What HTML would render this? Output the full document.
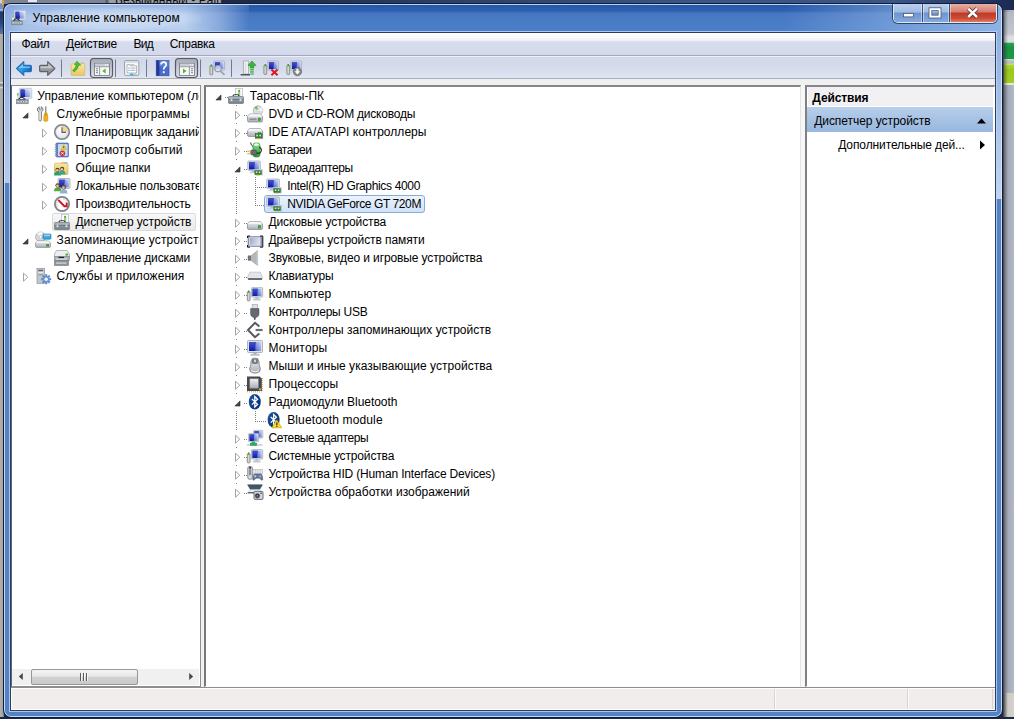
<!DOCTYPE html>
<html lang="ru">
<head>
<meta charset="utf-8">
<title>Управление компьютером</title>
<style>
html,body{margin:0;padding:0;}
body{width:1014px;height:719px;overflow:hidden;position:relative;background:#1b2a4e;font-family:"Liberation Sans",sans-serif;font-size:12px;color:#000;}
.abs{position:absolute;}
.t{position:absolute;white-space:nowrap;line-height:18px;height:18px;font-size:12px;color:#000;}
svg{position:absolute;overflow:visible;}
/* desktop bits behind */
#bgtop{left:0;top:0;width:222px;height:4px;background:linear-gradient(90deg,#a8c0e0 0,#d89848 3px,#7c8496 5px,#7c8496 105px,#5a6070 106px,#5a6070 108px,#9a9fa8 109px,#a0a4ac 100%);overflow:hidden;}
#bgtoptxt{left:115px;top:-6px;font-size:12px;line-height:12px;color:#101014;white-space:nowrap;letter-spacing:0.1px;}
#bgtopbox{left:28px;top:0;width:9px;height:2px;background:#e8e8ee;}
#bgtop2{left:222px;top:0;width:792px;height:12px;background:linear-gradient(90deg,#1c2946,#2e4470 35%,#3a5688 60%,#3a5688 85%,#1a2a52 100%);}
#bgleft{left:0;top:0;width:4px;height:719px;background:linear-gradient(90deg,#b0afab,#a9a8a6 60%,#6c6e74);}
#bgright{left:1003px;top:10px;width:11px;height:709px;background:linear-gradient(90deg,#9a9ea8,#b4b9ca);}
#bgl1{left:0;top:0;width:4px;height:34px;background:linear-gradient(#c0d0e8 0,#c0d0e8 3px,#8090b0 4px,#8090b0 9px,#c8d0e0 10px,#1c3c70 12px,#24447a 22px,#587aa8 34px);}
#bgl2{left:2px;top:0;width:2px;height:5px;background:#e09838;}
#bgl3{left:0;top:82px;width:3px;height:7px;background:linear-gradient(#d8d8dc 0,#d8d8dc 1px,#8a8a90 2px,#8a8a90 4px,#d0d0d4 5px,#d0d0d4 6px,#9a9a9e 7px);}
#bgbottom{left:0;top:717px;width:1014px;height:2px;background:#1a2744;}
/* window */
#win{left:4px;top:4px;width:998px;height:713px;border-radius:7px;background:#5383c5;box-shadow:0 0 0 1px #141c30;overflow:hidden;}
#glass{left:0;top:0;width:998px;height:29px;background:linear-gradient(#2356a8,#2d60b0 24%,#4676c0 32%,#4a7bc5 60%,#4a80c9);}
#glow{left:0;top:0;width:245px;height:29px;background:linear-gradient(rgba(110,150,215,0.45),rgba(110,150,215,0) 38%),linear-gradient(90deg,#8eace0,#a6c0e8 8%,#b4cbec 30%,#b8ceee 74%,rgba(184,206,238,0.55) 88%,rgba(184,206,238,0));}
#tglow{left:18px;top:3px;width:180px;height:24px;background:radial-gradient(ellipse at center,rgba(255,255,255,0.38),rgba(255,255,255,0.18) 55%,rgba(255,255,255,0) 75%);}
#glowr{left:780px;top:0;width:218px;height:29px;background:linear-gradient(90deg,rgba(150,185,232,0),rgba(150,185,232,0.45) 45%,rgba(160,192,236,0.8));}
#frl{left:0;top:28px;width:6px;height:151px;background:linear-gradient(#93aedd,#b6c9ea);}
#frr{left:992px;top:28px;width:6px;height:167px;background:linear-gradient(#8fb0e0,#c2d4f0);}
#hl{left:0;top:0;width:996px;height:711px;border:1px solid rgba(215,232,252,0.85);border-radius:7px;}
#hl2{left:5px;top:27px;width:986px;height:679px;border:1px solid rgba(190,215,248,0.8);}
#bgr1{left:1004px;top:43px;width:10px;height:16px;background:linear-gradient(#2aa450,#1a9440 30%,#1f9a48);}
#bgr2{left:1004px;top:65px;width:10px;height:18px;background:linear-gradient(#b0d430,#9cc81c 30%,#a4cc20);}
#bgrsh{left:1003px;top:10px;width:5px;height:709px;background:linear-gradient(90deg,rgba(30,34,44,0.8),rgba(30,34,44,0.35) 35%,rgba(30,34,44,0));}
#bgr0{left:1004px;top:12px;width:10px;height:31px;background:linear-gradient(#b4b8c2,#c2c6ce 70%,#dcdfe6 80%,#dcdfe6 95%,#8ac89a);}
#bgr4{left:1004px;top:59px;width:10px;height:6px;background:linear-gradient(#d0e4d0,#b4b8c0 50%,#c8dc80);}
#bgr5{left:1004px;top:83px;width:10px;height:2px;background:#e4e8e0;}
#bgr3{left:1003px;top:693px;width:11px;height:24px;background:linear-gradient(90deg,#8a8884,#cfccc8 40%,#d4d0cc);}

#client{left:10px;top:32px;width:984px;height:677px;background:#f0f0f0;border:1px solid #2f3d5c;}
#menubar{left:11px;top:33px;width:984px;height:22px;background:linear-gradient(#ffffff,#f3f5fa 32%,#d8ddee 40%,#d3d8ea 100%);border-bottom:1px solid #a4aab8;}
#toolbar{left:11px;top:56px;width:984px;height:22px;background:linear-gradient(#eceff8 0,#eceff8 1px,#d2d7e9 1px,#d6dbec 55%,#e0e5f2 100%);border-bottom:1px solid #a9aebb;}
#lpane{left:11px;top:85px;width:188px;height:600px;background:#fff;border:1px solid #8c8e94;border-left-color:#5d6678;overflow:hidden;}
#mpane{left:204px;top:85px;width:594px;height:599px;background:#fff;border:2px solid;border-color:#85868a #e4e4e6 #fdfdfd #77787c;border-bottom-width:1px;border-right-width:1px;box-shadow:4px 0 0 #f7f7f7;}
#rpane{left:805px;top:85px;width:187px;height:599px;background:#fff;border:2px solid;border-color:#85868a #fff #fdfdfd #808184;border-bottom-width:1px;border-right-width:1px;}
#status{left:11px;top:687px;width:984px;height:22px;background:#f0edec;border-top:1px solid #8e8e8e;box-shadow:inset 0 1px 0 #fff,inset 0 -1px 0 #fff,inset 1px 0 0 #fff;}

#sel1{left:40px;top:127px;width:142px;height:16px;border:1px solid #dadada;border-radius:2px;background:linear-gradient(#f8f8f8,#e9e9e9);}
#sel2{left:264px;top:195px;width:159px;height:16px;border:1px solid #84acdd;border-radius:3px;background:linear-gradient(#ebf3fd,#cfe1f8);}
#rhead{left:808px;top:87px;width:185px;height:19px;background:#f1f1f3;border-bottom:1px solid #fff;}
#rsel{left:807px;top:107px;width:186px;height:25px;background:linear-gradient(#b9cfea,#a6c2e4 50%,#99b8de);}
#hscroll{left:12px;top:669px;width:187px;height:16px;background:#f0f0f0;}
#thumb{left:31px;top:669px;width:105px;height:14px;border:1px solid #979797;border-radius:2px;background:linear-gradient(#f4f4f4,#e6e6e6 45%,#d2d2d2 50%,#c8c8c8);}
.cap{position:absolute;top:4px;height:18px;}
#capwrap{left:893px;top:4px;width:102px;height:18px;border:1px solid rgba(255,255,255,0.75);border-top:none;border-radius:0 0 5px 5px;box-shadow:0 0 0 1px rgba(20,30,60,0.7);overflow:hidden;}
#bmin{left:0;top:0;width:28px;height:18px;background:linear-gradient(#bccfec,#9fbbe4 45%,#6a94d0 50%,#86aade);border-right:1px solid rgba(30,45,80,0.75);box-shadow:inset -1px 0 0 rgba(255,255,255,0.45);}
#bmax{left:29px;top:0;width:26px;height:18px;background:linear-gradient(#bccfec,#9fbbe4 45%,#6a94d0 50%,#86aade);border-right:1px solid rgba(30,45,80,0.75);box-shadow:inset -1px 0 0 rgba(255,255,255,0.45),inset 1px 0 0 rgba(255,255,255,0.45);}
#bclose{left:56px;top:0;width:46px;height:18px;background:linear-gradient(#e6b0a4,#d47c6e 45%,#c03826 50%,#cc4c38 80%,#de8060);box-shadow:inset 1px 0 0 rgba(255,255,255,0.45);}
</style>
</head>
<body>
<div id="bgtop2" class="abs"></div>
<div id="bgtop" class="abs"><div id="bgtoptxt" class="abs">Безымянный - Paint</div><div id="bgtopbox" class="abs"></div></div>
<div id="bgleft" class="abs"></div>
<div id="bgright" class="abs"></div>
<div id="bgl1" class="abs"></div>
<div id="bgl2" class="abs"></div>
<div id="bgl3" class="abs"></div>
<div id="bgbottom" class="abs"></div>
<div id="bgr0" class="abs"></div>
<div id="bgr4" class="abs"></div>
<div id="bgr5" class="abs"></div>
<div id="bgr1" class="abs"></div>
<div id="bgr2" class="abs"></div>
<div id="bgr3" class="abs"></div>
<div id="bgrsh" class="abs"></div>
<div id="win" class="abs">
  <div id="glass" class="abs"></div>
  <div id="glow" class="abs"></div>
  <div id="tglow" class="abs"></div>
  <div id="glowr" class="abs"></div>
  <div id="frl" class="abs"></div>
  <div id="frr" class="abs"></div>
  <div id="hl" class="abs"></div>
  <div id="hl2" class="abs"></div>
</div>
<div id="client" class="abs"></div>
<div id="menubar" class="abs"></div>
<div id="toolbar" class="abs"></div>
<div id="lpane" class="abs">
<div id="sel1" class="abs"></div>
<div class="abs" style="left:0;top:0;width:187.4px;height:600px;overflow:hidden;">
<div class="t" style="left:25.299999999999997px;top:1px;letter-spacing:0.043px;">Управление компьютером (локальный)</div>
<div class="t" style="left:44.6px;top:19px;letter-spacing:0.095px;">Служебные программы</div>
<div class="t" style="left:63.5px;top:37px;letter-spacing:-0.011px;">Планировщик заданий</div>
<div class="t" style="left:63.5px;top:55px;letter-spacing:0.109px;">Просмотр событий</div>
<div class="t" style="left:63.5px;top:73px;letter-spacing:0.053px;">Общие папки</div>
<div class="t" style="left:63.5px;top:91px;letter-spacing:-0.102px;">Локальные пользователи</div>
<div class="t" style="left:63.5px;top:109px;letter-spacing:-0.066px;">Производительность</div>
<div class="t" style="left:63.5px;top:127px;letter-spacing:-0.075px;">Диспетчер устройств</div>
<div class="t" style="left:44.6px;top:145px;letter-spacing:0.099px;">Запоминающие устройства</div>
<div class="t" style="left:63.5px;top:163px;letter-spacing:-0.122px;">Управление дисками</div>
<div class="t" style="left:44.6px;top:181px;letter-spacing:0.046px;">Службы и приложения</div>
</div>
<svg width="188" height="600" viewBox="12 86 188 600" style="left:0;top:0;">
<!-- ===== LEFT TREE ICONS ===== -->
<!-- root: computer management -->
<use href="#cmgmt" x="16" y="88"/>
<!-- tools: wrench + screwdriver -->
<g transform="translate(36,106)">
 <path d="M3.2,0.8 Q1,1.6 1.3,4 Q1.6,5.4 3,5.8 V13.8 Q3,15 4.2,15 Q5.4,15 5.4,13.8 V5.8 Q6.8,5.2 7,3.8 Q7.2,1.6 5.2,0.8 V3.4 L4.2,4 L3.2,3.4 Z" fill="#dcdee2" stroke="#74767c" stroke-width="0.95"/>
 <path d="M3.9,6.2 V13.6" stroke="#fbfbfc" stroke-width="0.8"/>
 <rect x="9.2" y="0.4" width="1.2" height="7" fill="#7c8088"/>
 <path d="M8.4,7 H11.2 V9 L11.8,10 V14.4 Q11.8,15.4 9.8,15.4 Q7.8,15.4 7.8,14.4 V10 L8.4,9 Z" fill="#f0b21c" stroke="#c08410" stroke-width="0.5"/>
 <rect x="8.4" y="8.6" width="2.8" height="0.9" fill="#c0820c"/>
</g>
<!-- clock -->
<g transform="translate(54,124)">
 <circle cx="8" cy="8" r="7.2" fill="url(#gFace)" stroke="#84868c" stroke-width="1.7"/>
 <path d="M8,8 L8,2 A6,6 0 0 1 14,8 Z" fill="#f3d58c"/>
 <circle cx="8" cy="8" r="5.9" fill="none" stroke="#d5dae4" stroke-width="0.6"/>
 <path d="M8,3.2 V8.4 H12" fill="none" stroke="#5a5d64" stroke-width="1.1"/>
</g>
<!-- event viewer -->
<g transform="translate(54,142)">
 <rect x="2" y="1" width="12.5" height="14" rx="0.8" fill="#5b86c4" stroke="#3f66a4" stroke-width="0.6"/>
 <rect x="4" y="2.2" width="9.5" height="11.6" fill="#dbe8fa"/>
 <g stroke="#9fbbe4" stroke-width="0.6"><path d="M4,4 H13.5 M4,6 H13.5 M4,8 H13.5 M4,10 H13.5 M4,12 H13.5"/></g>
 <g fill="#8a94a8"><rect x="0.8" y="2.5" width="2.2" height="0.9"/><rect x="0.8" y="4.7" width="2.2" height="0.9"/><rect x="0.8" y="6.9" width="2.2" height="0.9"/><rect x="0.8" y="9.1" width="2.2" height="0.9"/><rect x="0.8" y="11.3" width="2.2" height="0.9"/><rect x="0.8" y="13.2" width="2.2" height="0.9"/></g>
 <path d="M9.7,2.6 L12.4,7.6 H7 Z" fill="#f6d42a" stroke="#c8a008" stroke-width="0.5"/>
 <rect x="9.3" y="4.2" width="0.9" height="2" fill="#5a4800"/>
 <circle cx="8.4" cy="11.3" r="2.6" fill="#e0323a" stroke="#a81820" stroke-width="0.4"/>
 <path d="M7.3,10.2 L9.5,12.4 M9.5,10.2 L7.3,12.4" stroke="#fff" stroke-width="0.9"/>
</g>
<!-- shared folders -->
<g transform="translate(54,160)">
 <path d="M6,3.5 L7.5,2 H13.5 V3.5 Z" fill="#e8c874"/>
 <path d="M0.5,4.2 Q0.5,3.2 1.5,3.2 H13 Q14,3.2 14,4.2 V13.4 Q14,14.4 13,14.4 H1.5 Q0.5,14.4 0.5,13.4 Z" fill="url(#gFolder)" stroke="#d0a850" stroke-width="0.6"/>
 <rect x="10" y="2.2" width="3" height="1.2" fill="#8ec0e8"/>
 <use href="#person" x="0" y="7.4" fill="#2ea070"/>
 <use href="#person" x="4.6" y="6.4" fill="#3aa880"/>
</g>
<!-- local users -->
<g transform="translate(54,178)">
 <use href="#monS" x="3.8" y="0" transform="scale(0.95)"/>
 <use href="#person" x="0" y="4.6" fill="#5aa838" transform="scale(1.05)"/>
 <g transform="translate(5.8,6.6) scale(1.1)"><path d="M0,8 Q0,4.2 3.5,4.2 Q7,4.2 7,8 Z" fill="#8ab4d8"/><circle cx="3.5" cy="2.4" r="2.1" fill="#6a4a30"/><circle cx="3.3" cy="2.9" r="1.3" fill="#e0b890"/></g>
</g>
<!-- performance -->
<g transform="translate(54,196)">
 <circle cx="8" cy="8" r="7.1" fill="#fdfdfd" stroke="#808288" stroke-width="1.8"/>
 <path d="M4.2,3.8 L10.4,10.2 H12.7 V6.4" fill="none" stroke="#c41822" stroke-width="1.9" stroke-linejoin="miter"/>
 <path d="M3.4,10.4 A5.4,5.4 0 0 1 3.6,5.2" fill="none" stroke="#8a8c92" stroke-width="0.9" stroke-dasharray="0.9 0.9"/>
 <path d="M9,3 A5.4,5.4 0 0 1 12.4,5.2" fill="none" stroke="#9a9ca2" stroke-width="0.8" stroke-dasharray="0.8 0.8"/>
</g>
<!-- device manager -->
<use href="#devmgr" x="54" y="214"/>
<!-- storage -->
<g transform="translate(35,232)">
 <circle cx="5.5" cy="5" r="5" fill="#d4d6da" stroke="#9a9da3" stroke-width="0.6"/>
 <path d="M5.5,5 L2,1.6 A5,5 0 0 1 8,0.7 Z" fill="#f6f6f8"/>
 <circle cx="5.5" cy="5" r="1.4" fill="#fff" stroke="#a8abb0" stroke-width="0.5"/>
 <rect x="8" y="2" width="8" height="5.2" rx="1" fill="#36a4dc" stroke="#1a78b4" stroke-width="0.6"/>
 <rect x="8.8" y="2.6" width="6.4" height="1.6" rx="0.6" fill="#8ed4f4"/>
 <use href="#drive" x="0" y="8.4" transform="translate(0,1.6) scale(1,0.82)"/>
</g>
<!-- disk management -->
<g transform="translate(54,250)">
 <path d="M2.5,0.5 H13 L15.5,4 V6.5 H0.5 V4 Z" fill="#eceef0" stroke="#9a9fa6" stroke-width="0.7"/>
 <rect x="11.5" y="3.6" width="2.6" height="2" fill="#48b03a"/>
 <rect x="0.5" y="6.5" width="15" height="4" fill="#a9aeb4" stroke="#80868e" stroke-width="0.6"/>
 <rect x="4.5" y="6.8" width="5.5" height="1.3" fill="#20242a"/>
 <rect x="2" y="8.6" width="11" height="1" fill="#e8eaec"/>
 <rect x="0.5" y="10.5" width="14" height="5" fill="#8d9298" stroke="#72787f" stroke-width="0.6"/>
 <rect x="2" y="12.5" width="10.5" height="1.1" fill="#dfe2e5"/>
</g>
<!-- services -->
<g transform="translate(35,268)">
 <rect x="2" y="0.5" width="7.5" height="14.8" fill="#c2c7cd" stroke="#8b9198" stroke-width="0.7"/>
 <rect x="3.4" y="1.8" width="4.6" height="1.3" fill="#5b6169"/>
 <rect x="3.4" y="4.2" width="4.6" height="1" fill="#f2f3f5"/>
 <rect x="3.4" y="6.2" width="4.6" height="1" fill="#878d95"/>
 <g transform="translate(11.2,11.2)">
  <g fill="#5a84c4"><rect x="-1" y="-5" width="2" height="10"/><rect x="-5" y="-1" width="10" height="2"/><rect x="-1" y="-5" width="2" height="10" transform="rotate(45)"/><rect x="-1" y="-5" width="2" height="10" transform="rotate(-45)"/></g>
  <circle r="3.4" fill="#6a94d0"/><circle r="1.7" fill="#eef4fc"/>
 </g>
</g>
<!-- left arrows -->
<use href="#aExp" x="22" y="112"/>
<use href="#aCol" x="42" y="128.7"/>
<use href="#aCol" x="42" y="146.7"/>
<use href="#aCol" x="42" y="164.7"/>
<use href="#aCol" x="42" y="182.7"/>
<use href="#aCol" x="42" y="200.7"/>
<use href="#aExp" x="22" y="238"/>
<use href="#aCol" x="23" y="272.7"/>

</svg>
</div>
<div id="mpane" class="abs"></div>
<div id="rpane" class="abs"></div>
<div id="status" class="abs"></div>
<div id="sel2" class="abs"></div>
<div id="rhead" class="abs"></div>
<div id="rsel" class="abs"></div>
<div id="hscroll" class="abs"></div>
<div id="thumb" class="abs"></div>
<div id="capwrap" class="abs"><div id="bmin" class="abs"></div><div id="bmax" class="abs"></div><div id="bclose" class="abs"></div></div>
<svg id="ico" width="1014" height="719" viewBox="0 0 1014 719" style="left:0;top:0;">
<defs>
<linearGradient id="gScr" x1="0" y1="0" x2="1" y2="0"><stop offset="0" stop-color="#0d1fae"/><stop offset="0.5" stop-color="#1a33c6"/><stop offset="0.58" stop-color="#6f8ae2"/><stop offset="1" stop-color="#bccbf6"/></linearGradient>
<linearGradient id="gScrV" x1="0" y1="0" x2="0" y2="1"><stop offset="0" stop-color="#ffffff" stop-opacity="0.25"/><stop offset="1" stop-color="#0a1890" stop-opacity="0.25"/></linearGradient>
<linearGradient id="gGray" x1="0" y1="0" x2="0" y2="1"><stop offset="0" stop-color="#f2f3f5"/><stop offset="1" stop-color="#a9adb4"/></linearGradient>
<linearGradient id="gGray2" x1="0" y1="0" x2="0" y2="1"><stop offset="0" stop-color="#b8c0c8"/><stop offset="0.5" stop-color="#8e98a2"/><stop offset="1" stop-color="#737c86"/></linearGradient>
<linearGradient id="gFolder" x1="0" y1="0" x2="0" y2="1"><stop offset="0" stop-color="#fbe7a2"/><stop offset="1" stop-color="#e9c468"/></linearGradient>
<linearGradient id="gBlueArrow" x1="0" y1="0" x2="0" y2="1"><stop offset="0" stop-color="#7fd0f8"/><stop offset="0.5" stop-color="#2f9be4"/><stop offset="1" stop-color="#1f72c8"/></linearGradient>
<linearGradient id="gGrayArrow" x1="0" y1="0" x2="0" y2="1"><stop offset="0" stop-color="#b0b2b4"/><stop offset="1" stop-color="#85878a"/></linearGradient>
<linearGradient id="gGreen" x1="0" y1="0" x2="0" y2="1"><stop offset="0" stop-color="#8fe08a"/><stop offset="1" stop-color="#1e9a2c"/></linearGradient>
<radialGradient id="gFace" cx="0.4" cy="0.35" r="0.7"><stop offset="0" stop-color="#ffffff"/><stop offset="1" stop-color="#dfe6f2"/></radialGradient>
<linearGradient id="gBT" x1="0" y1="0" x2="1" y2="1"><stop offset="0" stop-color="#1a55a8"/><stop offset="1" stop-color="#072a6c"/></linearGradient>

<!-- monitor 16x16 -->
<g id="mon">
 <rect x="0.5" y="0.5" width="15" height="12" rx="1" fill="#dfe3ea" stroke="#9aa2b2" stroke-width="0.8"/>
 <rect x="2" y="2" width="12" height="9" fill="url(#gScr)"/>
 <polygon points="2,2 9,2 7,11 2,11" fill="#0b1cb2"/>
 <rect x="2" y="2" width="12" height="9" fill="url(#gScrV)"/>
 <rect x="6.5" y="12.6" width="3" height="1.6" fill="#a9aeb8"/>
 <rect x="3.5" y="14" width="9" height="1.5" rx="0.7" fill="#c8ccd4" stroke="#9ea3ad" stroke-width="0.4"/>
</g>
<!-- small monitor 13x13 (no stand) -->
<g id="monS">
 <rect x="0.5" y="0.5" width="12.5" height="10.5" rx="0.8" fill="#dfe3ea" stroke="#9aa2b2" stroke-width="0.8"/>
 <rect x="1.8" y="1.8" width="10" height="8" fill="url(#gScr)"/>
 <polygon points="1.8,1.8 7.8,1.8 6,9.8 1.8,9.8" fill="#0b1cb2"/>
 <rect x="1.8" y="1.8" width="10" height="8" fill="url(#gScrV)"/>
</g>
<!-- green card 8x6 -->
<g id="card">
 <rect x="0" y="0.5" width="8" height="5" fill="#2c8038" stroke="#1c5c28" stroke-width="0.5"/>
 <rect x="1.2" y="1.6" width="1.8" height="1.8" fill="#d8f0c8"/>
 <rect x="4.6" y="1.6" width="1.8" height="1.8" fill="#d8f0c8"/>
 <rect x="0.8" y="5.5" width="5.5" height="1" fill="#d8b040"/>
 <rect x="8" y="-1.5" width="0.8" height="8" fill="#8b9098"/>
</g>
<!-- drive 16x9 -->
<g id="drive">
 <path d="M2.5,0.5 H13.5 L15.5,3 V7 Q15.5,8.5 14,8.5 H2 Q0.5,8.5 0.5,7 V3 Z" fill="url(#gGray)" stroke="#8a8f98" stroke-width="0.8"/>
 <path d="M2.5,0.8 H13.5 L15.2,3 H0.8 Z" fill="#f4f5f7"/>
 <rect x="11.2" y="4.5" width="2.6" height="2.6" fill="#3fae3a" stroke="#2a7a28" stroke-width="0.4"/>
</g>
<!-- toolbox 16x10 -->
<g id="tbox">
 <path d="M5,2.2 Q5,0.5 8,0.5 Q11,0.5 11,2.2" fill="none" stroke="#3c4046" stroke-width="1.2"/>
 <rect x="0.5" y="2.5" width="15" height="7" rx="0.8" fill="url(#gGray2)" stroke="#6c757e" stroke-width="0.7"/>
 <rect x="0.8" y="5" width="14.4" height="0.9" fill="#5f6870" opacity="0.8"/>
 <rect x="2.6" y="4.6" width="1.8" height="2.6" fill="#d9dee3"/>
 <rect x="11.6" y="4.6" width="1.8" height="2.6" fill="#d9dee3"/>
</g>
<!-- devmgr icon 16x16 -->
<g id="devmgr">
 <rect x="7.5" y="0.5" width="7" height="8.5" fill="#fbfbfb" stroke="#b4b8be" stroke-width="0.7"/>
 <rect x="10" y="3.2" width="2.2" height="5" fill="#9ccf7c"/>
 <circle cx="11.1" cy="2.8" r="1.1" fill="#4cae2c"/>
 <use href="#tbox" y="6"/>
</g>
<!-- arrows -->
<polygon id="aExp" points="6,0.9 6,6 0.9,6" fill="#484848" stroke="#262626" stroke-width="0.6" stroke-linejoin="miter"/>
<polygon id="aCol" points="0.5,0.5 0.5,8.5 4.8,4.5" fill="#fff" stroke="#a4a4a4" stroke-width="1" stroke-linejoin="miter"/>
<!-- person -->
<g id="person">
 <path d="M0,8 Q0,4.2 3.5,4.2 Q7,4.2 7,8 Z"/>
 <circle cx="3.5" cy="2.4" r="2.1" fill="#5a4030"/>
 <circle cx="3.3" cy="2.8" r="1.3" fill="#e8c4a0"/>
</g>
<!-- bluetooth -->
<g id="bt">
 <ellipse cx="6.2" cy="8" rx="6" ry="7.7" fill="url(#gBT)"/>
 <path d="M3.3,5.2 L9,10.6 L6.2,13.2 V2.8 L9,5.4 L3.3,10.8" fill="none" stroke="#fff" stroke-width="1.3" stroke-linejoin="miter"/>
</g>
<!-- tiny tower -->
<g id="tower">
 <rect x="0.3" y="1.6" width="2.8" height="9.2" rx="0.7" fill="#d4d6d2" stroke="#7a7c74" stroke-width="0.8"/>
 <rect x="1" y="0.4" width="1.4" height="2.4" fill="#3da62e"/>
</g>
<linearGradient id="gPressed" x1="0" y1="0" x2="0" y2="1"><stop offset="0" stop-color="#a6aab6"/><stop offset="0.45" stop-color="#c2c6d0"/><stop offset="1" stop-color="#dcdfe8"/></linearGradient>
<linearGradient id="gMem" x1="0" y1="0" x2="1" y2="0.3"><stop offset="0" stop-color="#9aa3c0"/><stop offset="1" stop-color="#dde1ee"/></linearGradient>
<linearGradient id="gBlueArrowH" x1="0" y1="0" x2="1" y2="0.4"><stop offset="0" stop-color="#58c0f6"/><stop offset="0.5" stop-color="#2a9cea"/><stop offset="1" stop-color="#0e6cc4"/></linearGradient>
<g id="cmgmt">
 <rect x="3.2" y="0.3" width="12.6" height="10" rx="0.8" fill="#e6e9f0" stroke="#b4bccc" stroke-width="0.7"/>
 <rect x="4.6" y="1.6" width="9.8" height="7.4" fill="url(#gScr2)"/>
 <polygon points="4.6,1.6 8.2,1.6 9.2,9 4.6,9" fill="#0b1cb2"/>
 <rect x="4.6" y="1.6" width="9.8" height="7.4" fill="url(#gScrV)"/>
 <rect x="0.9" y="5" width="1.9" height="5.6" fill="#d4e8c8"/><rect x="1.3" y="5.3" width="1.1" height="2.2" fill="#4aa632"/>
 <path d="M2.2,11.6 Q5.6,6.8 9.2,11.6 Z" fill="#f0f2f4" stroke="#1c2028" stroke-width="1.1"/>
 <rect x="0.3" y="11.5" width="12" height="4.3" fill="#8d989e" stroke="#74808a" stroke-width="0.5"/>
 <rect x="1.3" y="12.9" width="10" height="1.5" fill="#cdd4d9"/>
 <rect x="3.4" y="12.9" width="0.8" height="1.5" fill="#6f7a82"/><rect x="5.9" y="12.9" width="0.8" height="1.5" fill="#6f7a82"/><rect x="8.4" y="12.9" width="0.8" height="1.5" fill="#6f7a82"/>
</g>
<linearGradient id="gScr2" x1="0" y1="0" x2="1" y2="0"><stop offset="0" stop-color="#0d1fae"/><stop offset="0.4" stop-color="#1a33c6"/><stop offset="0.48" stop-color="#93a8ec"/><stop offset="1" stop-color="#d6defa"/></linearGradient>
</defs>

<!-- ===== MID TREE ICONS ===== -->
<!-- root -->
<use href="#devmgr" x="228" y="88"/>
<!-- DVD -->
<g transform="translate(247,106)">
 <circle cx="11" cy="4.6" r="4.8" fill="#dcdee2" stroke="#9b9ea5" stroke-width="0.6"/>
 <path d="M11,4.6 L7.2,2 A4.8,4.8 0 0 1 10,0 Z" fill="#6cc060"/>
 <path d="M11,4.6 L14,0.9 A4.8,4.8 0 0 1 15.7,5.4 Z" fill="#f4f4f6"/>
 <circle cx="11" cy="4.6" r="1.2" fill="#fff" stroke="#aaa" stroke-width="0.4"/>
 <use href="#drive" x="0" y="7.5"/>
 <rect x="2.5" y="12.6" width="7" height="1" fill="#6a6f78"/>
</g>
<!-- IDE -->
<g transform="translate(247,124)">
 <use href="#drive" x="0" y="4"/>
 <g transform="translate(8.2,9.2) scale(0.9,0.92)"><use href="#card"/></g>
</g>
<!-- battery -->
<g transform="translate(247,142)">
 <path d="M3.6,0.5 Q4,3.6 6,4.6" fill="none" stroke="#2a2e28" stroke-width="0.9"/>
 <rect x="6" y="1" width="7" height="14" rx="2.4" fill="url(#gGreen)" stroke="#1c7a24" stroke-width="0.6"/>
 <path d="M6.4,3 Q9.5,-0.6 12.6,3 Q9.5,4.6 6.4,3 Z" fill="#f4faf2"/>
 <path d="M12.4,5 Q16,7.5 13.4,10.5 Q11.5,12 9,10.8" fill="none" stroke="#2a2e28" stroke-width="1.1"/>
 <rect x="3.6" y="8" width="6" height="5" rx="1.4" fill="#686c72" stroke="#3a3d42" stroke-width="0.5"/>
 <rect x="0.3" y="8.6" width="3.4" height="1.2" fill="#e2b83a"/><rect x="0.3" y="11" width="3.4" height="1.2" fill="#e2b83a"/>
</g>
<!-- display adapters -->
<g id="iDisp" transform="translate(247,160)">
 <g transform="translate(0.3,0.6) scale(1,0.88)"><use href="#monS"/></g>
 <rect x="4.3" y="10.4" width="3.2" height="1.8" fill="#b9bdc5"/><rect x="2.4" y="12" width="6.2" height="1.2" fill="#d0d4da"/>
 <g transform="translate(7.8,10.2) scale(0.86,0.82)"><use href="#card"/></g>
</g>
<use href="#iDisp" x="19" y="18"/>
<use href="#iDisp" x="19" y="36"/>
<!-- disk drives -->
<use href="#drive" x="247" y="221"/>
<!-- memory tech driver -->
<g transform="translate(247,232)">
 <rect x="1" y="4.5" width="14.2" height="10" fill="#8f98b6" stroke="#6c7590" stroke-width="0.5"/>
 <rect x="2.4" y="5.8" width="10.6" height="7.4" fill="url(#gMem)" stroke="#e4e8f4" stroke-width="0.7"/>
 <path d="M0.5,6 V4 H3 M13,4 H15.8 V6 M15.8,13 V15.2 H13 M3,15.2 H0.5 V13" fill="none" stroke="#14161c" stroke-width="1"/>
 <path d="M15.8,6 V13" stroke="#14161c" stroke-width="1"/>
</g>
<!-- sound -->
<g transform="translate(247,250)">
 <path d="M1,5.8 H4 L10.6,0.4 V15.4 L4,10.4 H1 Z" fill="#b4b6ba" stroke="#8a8c90" stroke-width="0.5"/>
 <rect x="1" y="5.8" width="3" height="4.6" fill="#6e7176"/>
 <path d="M10.2,0.8 V15" stroke="#d8dadc" stroke-width="0.8"/>
</g>
<!-- keyboard -->
<g transform="translate(247,268)">
 <path d="M3,4.2 H13.2 L15.6,9.6 Q15.8,11.2 14,11.2 H2 Q0.2,11.2 0.4,9.6 Z" fill="#eef0f4" stroke="#a4a8b0" stroke-width="0.6"/>
 <g stroke="#b9bdc8" stroke-width="0.5" stroke-dasharray="0.8 0.8"><path d="M3.2,5.6 H13.2 M2.8,6.8 H13.8 M2.4,8 H14.2 M2,9.2 H14.6"/></g>
 <path d="M1,11 H15" stroke="#1e222a" stroke-width="1.2"/>
</g>
<!-- computer -->
<g id="iComp" transform="translate(247,286)">
 <use href="#tower" x="0" y="4"/>
 <g transform="translate(4,1.2) scale(0.9)"><use href="#monS"/></g>
 <rect x="8.3" y="11.2" width="3" height="1.6" fill="#b4b8c0"/><rect x="6.2" y="12.8" width="7.2" height="1.4" rx="0.6" fill="#ccd0d6" stroke="#a4a8b0" stroke-width="0.3"/>
</g>
<!-- USB -->
<g transform="translate(247,304)">
 <rect x="5.2" y="0.4" width="5.2" height="4.4" fill="#dfe1e4" stroke="#9a9da2" stroke-width="0.6"/>
 <path d="M3.6,4.6 H12 V10 Q12,12.6 9.4,13.2 L8.6,14 H7 L6.2,13.2 Q3.6,12.6 3.6,10 Z" fill="#66696e" stroke="#45484c" stroke-width="0.5"/>
 <rect x="7.2" y="13.8" width="1.2" height="2" fill="#2a2c30"/>
</g>
<!-- storage controllers -->
<g transform="translate(247,322)">
 <path d="M12.4,4.4 L8,0.8 L1,8 L8,15.2 L12.4,11.6" fill="none" stroke="#55585e" stroke-width="2" stroke-linejoin="miter"/>
 <path d="M8.6,8 H15.6" stroke="#6a6d73" stroke-width="2.2"/>
</g>
<!-- monitors -->
<use href="#mon" x="247" y="340"/>
<!-- mouse -->
<g transform="translate(247,358)">
 <path d="M5.2,0.6 Q8,-0.4 10.8,0.6 Q12.6,3.6 12.2,7 Q14.4,11 12.6,13.6 Q8,16.8 3.4,13.6 Q1.6,11 3.8,7 Q3.4,3.6 5.2,0.6 Z" fill="url(#gGray)" stroke="#6a6d73" stroke-width="0.7"/>
 <path d="M5.4,0.8 Q8,0 10.6,0.8 Q11.6,3 11.2,5.2 Q8,7 4.8,5.2 Q4.4,3 5.4,0.8 Z" fill="#777b82"/>
 <rect x="7.2" y="1.4" width="1.6" height="3" rx="0.8" fill="#e8eaec"/>
 <path d="M4,12.6 Q8,15.4 12,12.6" fill="none" stroke="#f4f5f6" stroke-width="1"/>
</g>
<!-- processor -->
<g transform="translate(247,376)">
 <path d="M0,15.8 H14.6 M15.2,2 V15" stroke="#c8a040" stroke-width="1" stroke-dasharray="1 1"/>
 <path d="M0,0.4 H12.6 L14.8,2.6 V15 H0 Z" fill="#46484c"/>
 <rect x="2.8" y="2.8" width="8.6" height="9.4" fill="url(#gGray)" stroke="#8a8d92" stroke-width="0.5"/>
 <rect x="12" y="12.4" width="2" height="2" fill="#d8a838"/>
</g>
<!-- bluetooth -->
<use href="#bt" x="248.6" y="393.8"/>
<g transform="translate(267.4,411.8)">
 <use href="#bt"/>
 <path d="M9.4,8 L14.4,16 H4.4 Z" fill="#f8da2c" stroke="#c09c08" stroke-width="0.6" stroke-linejoin="round"/>
 <rect x="8.9" y="10.6" width="1.1" height="3" fill="#2a2200"/><rect x="8.9" y="14.1" width="1.1" height="1" fill="#2a2200"/>
</g>
<!-- network -->
<g transform="translate(247,430)">
 <g transform="translate(6.2,0) scale(0.74)"><use href="#monS"/></g>
 <g transform="translate(1.2,3) scale(0.8)"><use href="#monS"/></g>
 <rect x="4.6" y="11.6" width="3.6" height="1.6" fill="#38b060"/>
 <rect x="3" y="13" width="7" height="2.2" fill="#2aa858"/>
 <path d="M0,15 H15.6" stroke="#b8bcc4" stroke-width="1.2"/>
 <rect x="3.2" y="14.2" width="6.6" height="1.6" fill="#2aa858"/>
</g>
<!-- system devices -->
<use href="#iComp" y="162"/>
<!-- HID -->
<g transform="translate(247,466)">
 <rect x="0.8" y="0.6" width="4.6" height="12.6" rx="1.6" fill="#d9dbdf" stroke="#686c74" stroke-width="0.8"/>
 <rect x="2" y="3.2" width="2.2" height="6" fill="#8a8e96"/>
 <rect x="2.2" y="0.8" width="1.8" height="2" fill="#3a3e46"/>
 <rect x="5.6" y="3.4" width="9.8" height="4.4" fill="#f0f1f4" stroke="#9a9ea8" stroke-width="0.5"/>
 <path d="M6.4,4.8 H14.6 M6.4,6.2 H14.6" stroke="#a8acb6" stroke-width="0.7" stroke-dasharray="1 0.7"/>
 <path d="M6.6,9 Q6.8,7.8 8.4,8 H13 Q14.8,7.8 15.2,9.4 L15.8,13.2 Q15.6,14.8 14.2,14 L12.8,12.2 H8.8 L7.4,14 Q6,14.8 5.8,13.2 Z" fill="#6a7a94" stroke="#3c4a62" stroke-width="0.5"/>
 <circle cx="8.2" cy="10.2" r="1" fill="#c4d0e4"/><circle cx="13.2" cy="10.2" r="1" fill="#8ab4f0"/>
</g>
<!-- imaging -->
<g transform="translate(247,484)">
 <path d="M0.6,0.8 H15.4 L12.6,5.4 H3.4 Z" fill="#3e5868" stroke="#2a3840" stroke-width="0.5"/>
 <path d="M3.4,5.4 H12.6 L14.6,8.6 H1.4 Z" fill="#e9ecef" stroke="#a8adb4" stroke-width="0.5"/>
 <rect x="0.6" y="8.2" width="9" height="1.2" fill="#4a5058"/>
 <rect x="7" y="7.4" width="9" height="8" rx="1" fill="#d5d9de" stroke="#4a5058" stroke-width="0.8"/>
 <circle cx="10.4" cy="11.8" r="2.4" fill="#2a3038" stroke="#70767e" stroke-width="0.6"/><circle cx="10.4" cy="11.8" r="0.9" fill="#8aa0c0"/>
 <rect x="13.2" y="8.6" width="1.8" height="1.2" fill="#4a5058"/>
</g>
<!-- mid arrows -->
<use href="#aExp" x="215" y="94"/>
<use href="#aCol" x="235" y="110.7"/>
<use href="#aCol" x="235" y="128.7"/>
<use href="#aCol" x="235" y="146.7"/>
<use href="#aExp" x="234" y="166"/>
<use href="#aCol" x="235" y="218.7"/>
<use href="#aCol" x="235" y="236.7"/>
<use href="#aCol" x="235" y="254.7"/>
<use href="#aCol" x="235" y="272.7"/>
<use href="#aCol" x="235" y="290.7"/>
<use href="#aCol" x="235" y="308.7"/>
<use href="#aCol" x="235" y="326.7"/>
<use href="#aCol" x="235" y="344.7"/>
<use href="#aCol" x="235" y="362.7"/>
<use href="#aCol" x="235" y="380.7"/>
<use href="#aExp" x="234" y="400"/>
<use href="#aCol" x="235" y="434.7"/>
<use href="#aCol" x="235" y="452.7"/>
<use href="#aCol" x="235" y="470.7"/>
<use href="#aCol" x="235" y="488.7"/>

<!-- ===== TREE DOTTED LINES ===== -->
<g stroke="#808080" stroke-width="1" stroke-dasharray="1 1" fill="none">
 <path d="M236.5,177 V214"/>
 <path d="M255.5,177 V206"/>
 <path d="M255,187.5 H266"/>
 <path d="M255,205.5 H264"/>
 <path d="M236.5,411 V430"/>
 <path d="M255.5,411 V422"/>
 <path d="M255,421.5 H266"/>
 <path d="M225,97.5 H228"/>
</g>
<g fill="#808080" id="dots"><rect x="236" y="105" width="1" height="1"/><rect x="244" y="115" width="1" height="1"/><rect x="246" y="115" width="1" height="1"/><rect x="236" y="123" width="1" height="1"/><rect x="244" y="133" width="1" height="1"/><rect x="246" y="133" width="1" height="1"/><rect x="236" y="141" width="1" height="1"/><rect x="244" y="151" width="1" height="1"/><rect x="246" y="151" width="1" height="1"/><rect x="236" y="159" width="1" height="1"/><rect x="244" y="169" width="1" height="1"/><rect x="246" y="169" width="1" height="1"/><rect x="236" y="177" width="1" height="1"/><rect x="236" y="195" width="1" height="1"/><rect x="236" y="213" width="1" height="1"/><rect x="244" y="223" width="1" height="1"/><rect x="246" y="223" width="1" height="1"/><rect x="236" y="231" width="1" height="1"/><rect x="244" y="241" width="1" height="1"/><rect x="246" y="241" width="1" height="1"/><rect x="236" y="249" width="1" height="1"/><rect x="244" y="259" width="1" height="1"/><rect x="246" y="259" width="1" height="1"/><rect x="236" y="267" width="1" height="1"/><rect x="244" y="277" width="1" height="1"/><rect x="246" y="277" width="1" height="1"/><rect x="236" y="285" width="1" height="1"/><rect x="244" y="295" width="1" height="1"/><rect x="246" y="295" width="1" height="1"/><rect x="236" y="303" width="1" height="1"/><rect x="244" y="313" width="1" height="1"/><rect x="246" y="313" width="1" height="1"/><rect x="236" y="321" width="1" height="1"/><rect x="244" y="331" width="1" height="1"/><rect x="246" y="331" width="1" height="1"/><rect x="236" y="339" width="1" height="1"/><rect x="244" y="349" width="1" height="1"/><rect x="246" y="349" width="1" height="1"/><rect x="236" y="357" width="1" height="1"/><rect x="244" y="367" width="1" height="1"/><rect x="246" y="367" width="1" height="1"/><rect x="236" y="375" width="1" height="1"/><rect x="244" y="385" width="1" height="1"/><rect x="246" y="385" width="1" height="1"/><rect x="236" y="393" width="1" height="1"/><rect x="244" y="403" width="1" height="1"/><rect x="246" y="403" width="1" height="1"/><rect x="236" y="411" width="1" height="1"/><rect x="236" y="429" width="1" height="1"/><rect x="244" y="439" width="1" height="1"/><rect x="246" y="439" width="1" height="1"/><rect x="236" y="447" width="1" height="1"/><rect x="244" y="457" width="1" height="1"/><rect x="246" y="457" width="1" height="1"/><rect x="236" y="465" width="1" height="1"/><rect x="244" y="475" width="1" height="1"/><rect x="246" y="475" width="1" height="1"/><rect x="236" y="483" width="1" height="1"/><rect x="244" y="493" width="1" height="1"/><rect x="246" y="493" width="1" height="1"/></g>
<!-- ===== TOOLBAR ICONS ===== -->
<!-- back -->
<path d="M16.6,68.5 L23.8,61.6 V65.4 H30.4 Q31.4,65.4 31.4,66.4 V70.6 Q31.4,71.6 30.4,71.6 H23.8 V75.4 Z" fill="url(#gBlueArrowH)" stroke="#2a6cb4" stroke-width="1.1" stroke-linejoin="round"/>
<path d="M18.8,68 L23,64.2 V66.6 H30 V68 H19 Z" fill="#a8e0fc" opacity="0.6"/>
<!-- forward -->
<path d="M54.9,68.5 L47.7,61.6 V65.4 H40.6 Q39.6,65.4 39.6,66.4 V70.6 Q39.6,71.6 40.6,71.6 H47.7 V75.4 Z" fill="url(#gGrayArrow)" stroke="#5c606a" stroke-width="1.1" stroke-linejoin="round"/>
<path d="M52.8,68 L48.3,63.8 V66.6 H40.4 V68.2 H52.4 Z" fill="#d4d5d8" opacity="0.7"/>
<!-- separators -->
<g stroke="#737a8c" stroke-width="1"><path d="M61.5,59.5 V77 M115.5,59.5 V77 M146.5,59.5 V77 M200.5,59.5 V77 M231.5,59.5 V77"/></g>
<!-- up folder -->
<g transform="translate(70,60)">
 <path d="M8.6,3.8 L9.8,2.5 H14.6 V3.8 Z" fill="#e6c676"/>
 <rect x="1.2" y="3.7" width="13.6" height="11.8" rx="0.7" fill="url(#gFolder)" stroke="#d9b45c" stroke-width="0.6"/>
 <rect x="11.2" y="2.4" width="2.6" height="1.2" fill="#a8c8e8"/>
 <path d="M7,1.2 L10.8,5.3 L8.7,5.2 Q8,9.2 4.2,11.9 L2.7,10.3 Q5.9,8 6.2,4.9 L4.3,4.5 Z" fill="#4cc02c" stroke="#2f9a1c" stroke-width="0.6" stroke-linejoin="round"/>
</g>
<!-- pressed button 1 -->
<rect x="90.5" y="58.5" width="22" height="19" rx="3.2" fill="url(#gPressed)" stroke="#565a66" stroke-width="1.2"/>
<g transform="translate(94,62.8) scale(1,0.98)">
 <rect x="0.5" y="0.5" width="15" height="12.4" fill="#f6f7f9" stroke="#7d828c" stroke-width="0.9"/>
 <rect x="1" y="1" width="14" height="2.4" fill="#c9cdd6"/>
 <rect x="11" y="1.6" width="1.2" height="1.2" fill="#fff"/><rect x="13" y="1.6" width="1.2" height="1.2" fill="#fff"/>
 <path d="M0.5,4 H15.5 M5.6,4 V12.6" stroke="#7d828c" stroke-width="0.8"/>
 <rect x="2" y="5.6" width="2" height="1" fill="#7d828c"/><rect x="2" y="7.6" width="2" height="1" fill="#7d828c"/><rect x="2" y="9.6" width="2" height="1" fill="#7d828c"/>
 <path d="M11.6,5.8 V11 L8.2,8.4 Z" fill="#58b436"/>
</g>
<!-- properties -->
<g transform="translate(124,60)">
 <rect x="0.6" y="0.6" width="14.2" height="14.8" rx="1" fill="#f7f8fa" stroke="#8d929c" stroke-width="0.9"/>
 <rect x="1.2" y="1.2" width="13" height="1.6" fill="#d4d7de"/>
 <path d="M3,4.6 H6.2 V5.8 H12.6 V13 H3 Z" fill="#fff" stroke="#9da2ac" stroke-width="0.8"/>
 <rect x="6.8" y="4.2" width="3" height="1" fill="#b4b8c2"/>
 <rect x="4.4" y="7.6" width="1.2" height="1" fill="#38a8d8"/><rect x="6.4" y="7.6" width="5" height="1" fill="#a8adb8"/>
 <rect x="4.4" y="9.8" width="1.2" height="1" fill="#38a8d8"/><rect x="6.4" y="9.8" width="5" height="1" fill="#a8adb8"/>
 <rect x="6" y="13.6" width="3.4" height="1.6" fill="#2cb4e4"/>
 <rect x="10" y="13.6" width="2.6" height="1.6" fill="#c0c4cc"/>
</g>
<!-- help -->
<g transform="translate(155,60)">
 <rect x="1.2" y="0.4" width="12.8" height="15.4" fill="#4a6cc8" stroke="#2c4aa0" stroke-width="0.6"/>
 <rect x="1.4" y="0.6" width="3" height="15" fill="#24389a"/>
 <rect x="4.4" y="0.6" width="9.4" height="6" fill="#6a8ce0" opacity="0.6"/>
 <path d="M6,4.6 Q6,2.2 8.6,2.2 Q11.2,2.2 11.2,4.6 Q11.2,6 9.8,7 Q8.7,7.8 8.7,9.6" fill="none" stroke="#fff" stroke-width="1.7"/>
 <rect x="7.8" y="11.2" width="1.9" height="1.9" fill="#fff"/>
</g>
<!-- pressed button 2 -->
<rect x="175.5" y="58.5" width="22" height="19" rx="3.2" fill="url(#gPressed)" stroke="#565a66" stroke-width="1.2"/>
<g transform="translate(179,62.8) scale(1,0.98)">
 <rect x="0.5" y="0.5" width="15" height="12.4" fill="#f6f7f9" stroke="#7d828c" stroke-width="0.9"/>
 <rect x="1" y="1" width="14" height="2.4" fill="#c9cdd6"/>
 <rect x="11" y="1.6" width="1.2" height="1.2" fill="#fff"/><rect x="13" y="1.6" width="1.2" height="1.2" fill="#fff"/>
 <path d="M0.5,4 H15.5 M10.4,4 V12.6" stroke="#7d828c" stroke-width="0.8"/>
 <rect x="12" y="5.6" width="2" height="1" fill="#7d828c"/><rect x="12" y="7.6" width="2" height="1" fill="#7d828c"/><rect x="12" y="9.6" width="2" height="1" fill="#7d828c"/>
 <path d="M4,5.8 V11 L7.6,8.4 Z" fill="#58b436"/>
</g>
<!-- scan -->
<g transform="translate(209,60)">
 <use href="#tower" x="0.6" y="4"/>
 <g transform="translate(4.4,0.6) scale(0.86)"><use href="#monS"/></g>
 <circle cx="9" cy="8.6" r="3.3" fill="#d4e6f8" fill-opacity="0.85" stroke="#8a93a4" stroke-width="1"/>
 <path d="M11.4,11 L15,14.4" stroke="#a0a6b0" stroke-width="1.8" stroke-linecap="round"/>
</g>
<!-- update driver -->
<g transform="translate(240,60)">
 <path d="M3.4,1 H8.4 V14 H3.4 Z" fill="#fafafa" stroke="#9a9ea6" stroke-width="0.8"/>
 <rect x="4.6" y="2.4" width="1.8" height="11" fill="#d8dade"/>
 <path d="M0.6,14.8 H10" stroke="#30343c" stroke-width="1.2"/>
 <path d="M12,1 L16,5.4 H13.8 V8 H10.2 V5.4 H8 Z" fill="#3cb43c" stroke="#1e8a24" stroke-width="0.6" stroke-linejoin="round"/>
 <rect x="10.2" y="9" width="3.6" height="1.4" fill="#3cb43c"/><rect x="10.2" y="11.2" width="3.6" height="1.4" fill="#3cb43c"/><rect x="10.2" y="13.4" width="3.6" height="1.2" fill="#3cb43c"/>
</g>
<!-- uninstall -->
<g transform="translate(263,60)">
 <use href="#tower" x="0.6" y="3.6"/>
 <g transform="translate(4.4,0.6) scale(0.86)"><use href="#monS"/></g>
 <path d="M8.4,9.4 L14.6,15.2 M14.6,9.4 L8.4,15.2" stroke="#d81c24" stroke-width="2"/>
</g>
<!-- disable -->
<g transform="translate(286,60)">
 <use href="#tower" x="0.6" y="3.6"/>
 <g transform="translate(4.4,0.6) scale(0.86)"><use href="#monS"/></g>
 <circle cx="11.4" cy="11.6" r="4.2" fill="#85888e" stroke="#60636a" stroke-width="0.7"/>
 <path d="M10.4,8.8 H12.4 V11.2 H14.2 L11.4,14.4 L8.6,11.2 H10.4 Z" fill="#fff"/>
</g>
<!-- title icon -->
<g transform="translate(11.3,10.3) scale(0.92)"><use href="#cmgmt"/></g>

<!-- caption glyphs -->
<rect x="903.5" y="13.5" width="10" height="3.4" fill="#fff" stroke="#4a5670" stroke-width="0.8"/>
<rect x="930.4" y="9.2" width="9.2" height="7.4" fill="none" stroke="#4a5670" stroke-width="3.6"/>
<rect x="930.4" y="9.2" width="9.2" height="7.4" fill="none" stroke="#fff" stroke-width="2"/>
<path d="M968.2,8.6 L977,17 M977,8.6 L968.2,17" stroke="#5a2a28" stroke-width="4" stroke-linecap="butt"/>
<path d="M968.2,8.6 L977,17 M977,8.6 L968.2,17" stroke="#fff" stroke-width="2.5" stroke-linecap="butt"/>
<!-- right pane arrows -->
<path d="M977,123.5 L981.5,118.5 L986,123.5 Z" fill="#000"/>
<path d="M980,140.5 L985,145 L980,149.5 Z" fill="#000"/>
<!-- scrollbar arrows and grip -->
<path d="M22.8,673 V680 L18.8,676.5 Z" fill="#484848"/>
<path d="M189.2,673 V680 L193.2,676.5 Z" fill="#484848"/>
<g stroke="#5a5a5a" stroke-width="1"><path d="M80.5,673 V681 M83.5,673 V681 M86.5,673 V681"/></g>
<g stroke="#fff" stroke-width="1" opacity="0.8"><path d="M81.5,673 V681 M84.5,673 V681 M87.5,673 V681"/></g>
<!-- status dividers -->
<g stroke="#d6d4d2" stroke-width="1"><path d="M774.5,689 V709 M907.5,689 V709 M992.5,689 V709"/></g>
<g stroke="#fbfbfb" stroke-width="1"><path d="M775.5,689 V709 M908.5,689 V709"/></g>

</svg>

<div class="t" style="left:32.5px;top:8.6px;letter-spacing:0.083px;">Управление компьютером</div>
<div class="t" style="left:21.5px;top:34.5px;letter-spacing:-0.404px;">Файл</div>
<div class="t" style="left:66px;top:34.5px;letter-spacing:-0.221px;">Действие</div>
<div class="t" style="left:133.6px;top:34.5px;letter-spacing:-0.806px;">Вид</div>
<div class="t" style="left:169.7px;top:34.5px;letter-spacing:-0.297px;">Справка</div>
<div class="t" style="left:249.8px;top:87px;letter-spacing:-0.003px;">Тарасовы-ПК</div>
<div class="t" style="left:268.5px;top:105px;letter-spacing:-0.218px;">DVD и CD-ROM дисководы</div>
<div class="t" style="left:268.5px;top:123px;letter-spacing:0.038px;">IDE ATA/ATAPI контроллеры</div>
<div class="t" style="left:268.5px;top:141px;letter-spacing:-0.496px;">Батареи</div>
<div class="t" style="left:268.5px;top:159px;letter-spacing:-0.388px;">Видеоадаптеры</div>
<div class="t" style="left:287.2px;top:177px;letter-spacing:-0.344px;">Intel(R) HD Graphics 4000</div>
<div class="t" style="left:287.2px;top:195px;letter-spacing:-0.395px;">NVIDIA GeForce GT 720M</div>
<div class="t" style="left:268.5px;top:213px;letter-spacing:-0.112px;">Дисковые устройства</div>
<div class="t" style="left:268.5px;top:231px;letter-spacing:-0.095px;">Драйверы устройств памяти</div>
<div class="t" style="left:268.5px;top:249px;letter-spacing:-0.112px;">Звуковые, видео и игровые устройства</div>
<div class="t" style="left:268.5px;top:267px;letter-spacing:-0.205px;">Клавиатуры</div>
<div class="t" style="left:268.5px;top:285px;letter-spacing:0.066px;">Компьютер</div>
<div class="t" style="left:268.5px;top:303px;letter-spacing:-0.264px;">Контроллеры USB</div>
<div class="t" style="left:268.5px;top:321px;letter-spacing:0.021px;">Контроллеры запоминающих устройств</div>
<div class="t" style="left:268.5px;top:339px;letter-spacing:0.179px;">Мониторы</div>
<div class="t" style="left:268.5px;top:357px;letter-spacing:0.027px;">Мыши и иные указывающие устройства</div>
<div class="t" style="left:268.5px;top:375px;letter-spacing:0.020px;">Процессоры</div>
<div class="t" style="left:268.5px;top:393px;letter-spacing:-0.043px;">Радиомодули Bluetooth</div>
<div class="t" style="left:287.2px;top:411px;letter-spacing:0.131px;">Bluetooth module</div>
<div class="t" style="left:268.5px;top:429px;letter-spacing:-0.398px;">Сетевые адаптеры</div>
<div class="t" style="left:268.5px;top:447px;letter-spacing:-0.153px;">Системные устройства</div>
<div class="t" style="left:268.5px;top:465px;letter-spacing:-0.158px;">Устройства HID (Human Interface Devices)</div>
<div class="t" style="left:268.5px;top:483px;letter-spacing:0.016px;">Устройства обработки изображений</div>
<div class="t" style="left:812.3px;top:89px;letter-spacing:-0.108px;font-weight:bold;">Действия</div>
<div class="t" style="left:814.2px;top:112px;letter-spacing:-0.049px;">Диспетчер устройств</div>
<div class="t" style="left:838.2px;top:136px;letter-spacing:-0.101px;">Дополнительные дей...</div>
</body>
</html>
